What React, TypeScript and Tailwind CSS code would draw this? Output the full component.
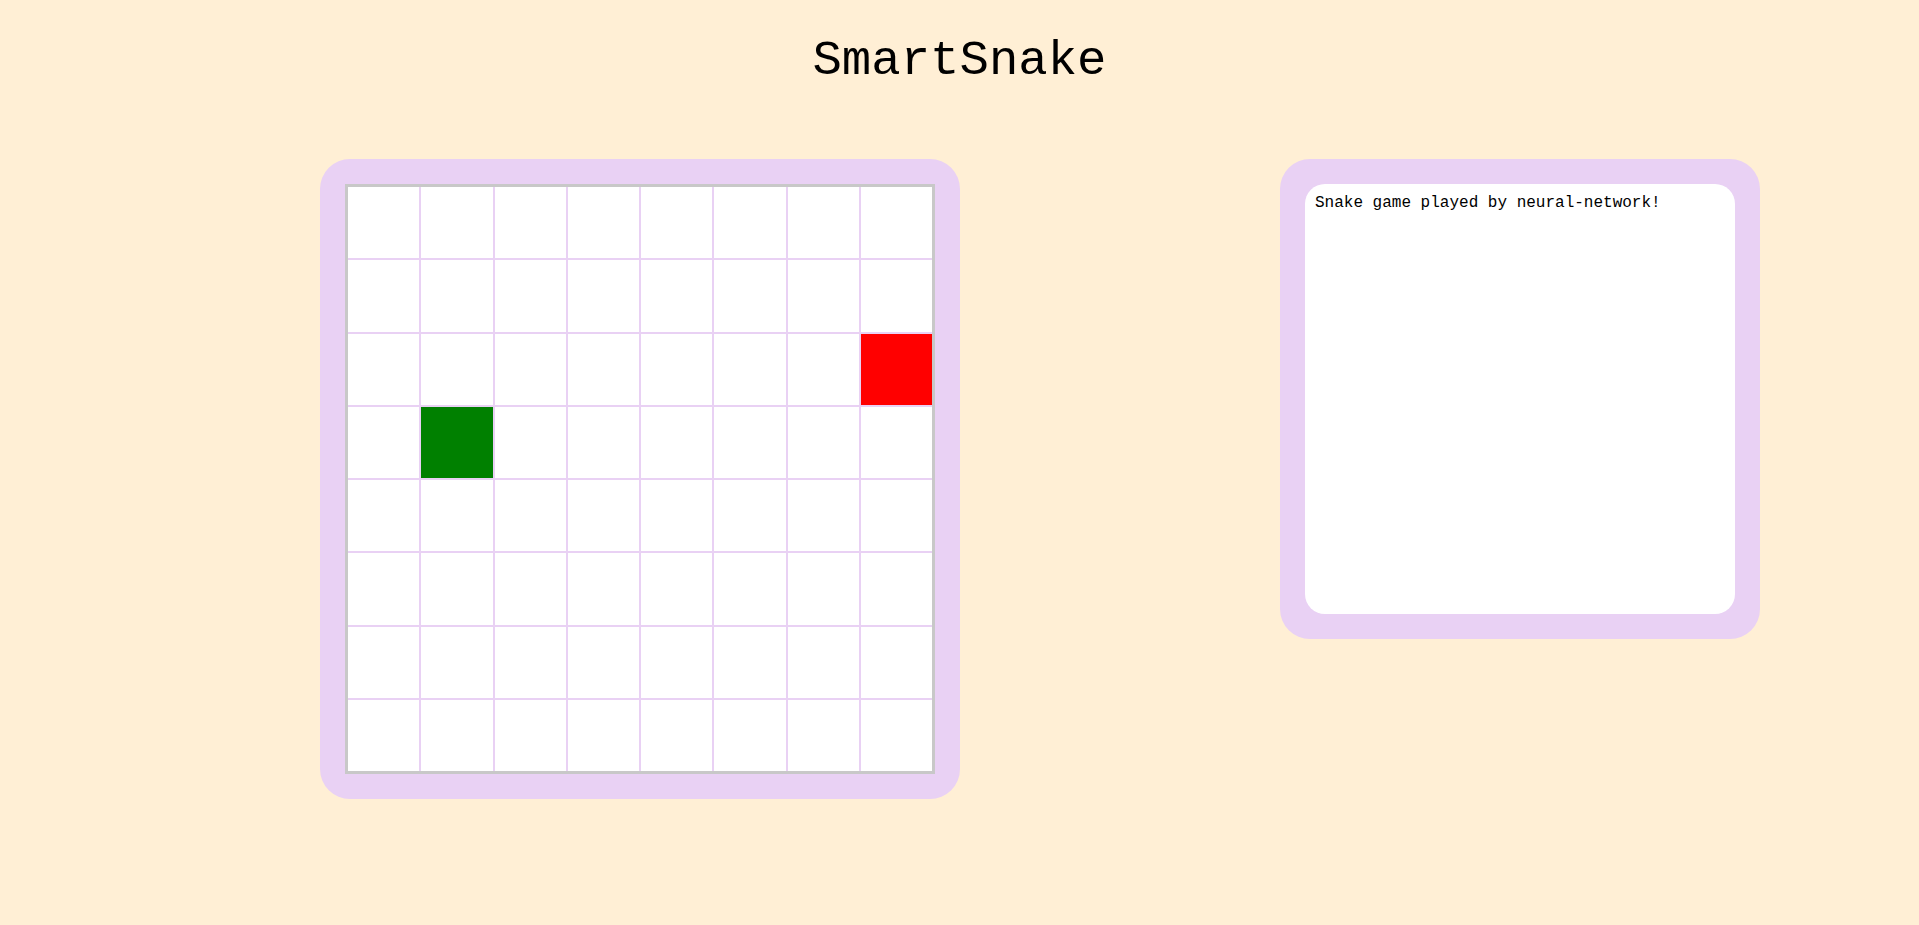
const SIZE = 8;
const snake = [{ r: 3, c: 1 }];
const food = { r: 2, c: 7 };

function Board() {
  const cells = [];
  for (let r = 0; r < SIZE; r++) {
    for (let c = 0; c < SIZE; c++) {
      const isSnake = snake.some((s) => s.r === r && s.c === c);
      const isFood = food.r === r && food.c === c;
      cells.push(
        <div
          key={`${r}-${c}`}
          className={isSnake ? 'bg-[#008000]' : isFood ? 'bg-[#ff0000]' : 'bg-white'}
        />
      );
    }
  }
  return (
    <div className="w-[590px] h-[590px] border-[3px] border-[#c8c8c8] bg-[#e9d1f4] grid grid-cols-8 grid-rows-8 gap-[2px]">
      {cells}
    </div>
  );
}

export default function App() {
  return (
    <div className="min-h-[925px] w-full bg-[#ffefd5] text-black font-['Liberation_Mono','Courier_New',monospace]">
      <h1 className="pt-[33px] text-center text-[49px] leading-[56px] font-normal">SmartSnake</h1>
      <div className="mt-[70px] flex items-start pl-[320px] gap-[320px]">
        <div className="w-[640px] h-[640px] rounded-[30px] bg-[#e9d1f4] p-[25px]">
          <Board />
        </div>
        <div className="w-[480px] h-[480px] rounded-[30px] bg-[#e9d1f4] p-[25px]">
          <div className="w-full h-full rounded-[20px] bg-white px-[10px] pt-[10px] text-[16px] leading-[18px]">
            Snake game played by neural-network!
          </div>
        </div>
      </div>
    </div>
  );
}
